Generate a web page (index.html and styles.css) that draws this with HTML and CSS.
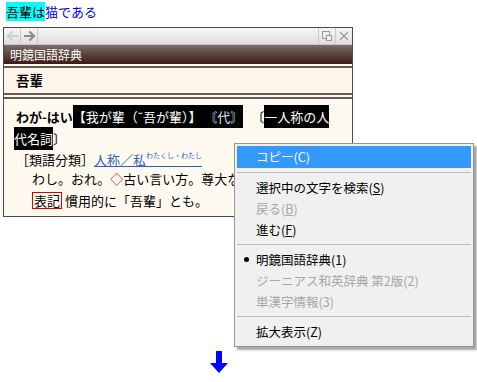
FILE: index.html
```html
<!DOCTYPE html>
<html>
<head>
    <title>吾輩は猫である</title>
    <meta charset="utf-8">
    <link rel="stylesheet" href="styles.css">
</head>
<body>
<div class="top-line"><span class="hit">吾輩は</span><span class="rest">猫である</span></div>

<div class="window">
    <div class="toolbar">
        <span class="tb-btn disabled">
            <svg width="15" height="14" viewBox="0 0 15 14"><path d="M13 7H3M7.5 2.5L3 7l4.5 4.5" fill="none" stroke="currentColor" stroke-width="2"/></svg>
        </span>
        <span class="tb-btn">
            <svg width="15" height="14" viewBox="0 0 15 14"><path d="M2 7h10M7.5 2.5L12 7l-4.5 4.5" fill="none" stroke="currentColor" stroke-width="2"/></svg>
        </span>
        <span class="tb-fill"></span>
        <span class="tb-btn right">
            <svg width="12" height="12" viewBox="0 0 12 12"><rect x="1.5" y="1.5" width="7" height="7" fill="none" stroke="currentColor"/><rect x="5.5" y="5.5" width="5" height="5" fill="#eee" stroke="currentColor"/></svg>
        </span>
        <span class="tb-btn right">
            <svg width="12" height="12" viewBox="0 0 12 12"><path d="M2 2l8 8M10 2l-8 8" stroke="currentColor" stroke-width="1.2"/></svg>
        </span>
    </div>
    <div class="titlebar">明鏡国語辞典</div>
    <div class="headword">吾輩</div>
    <div class="entry">
        <div class="line l1"><b>わが-はい</b><span class="sel">【我が輩（˘吾が輩）】 <span class="pos">〘代〙</span></span><span class="gap"> </span><span class="br">〔</span><span class="sel">一人称の人</span></div>
        <div class="line l2"><span class="sel">代名詞</span><span class="br-end">〕</span></div>
        <div class="line l3">［類語分類］<a class="link" href="#">人称／私<span class="ruby">わたくし・わたし</span></a></div>
        <div class="line l4">わし。おれ。<span class="mark">◇</span>古い言い方。尊大な言い方。</div>
        <div class="line l5"><span class="box">表記</span> 慣用的に「吾輩」とも。</div>
    </div>
</div>

<div class="menu">
    <div class="item active">コピー(C)</div>
    <div class="sep"></div>
    <div class="item">選択中の文字を検索(<u>S</u>)</div>
    <div class="item off">戻る(<u>B</u>)</div>
    <div class="item">進む(<u>F</u>)</div>
    <div class="sep"></div>
    <div class="item checked">明鏡国語辞典(1)</div>
    <div class="item off">ジーニアス和英辞典 第2版(2)</div>
    <div class="item off">単漢字情報(3)</div>
    <div class="sep"></div>
    <div class="item">拡大表示(Z)</div>
</div>

<div class="arrow">
    <svg width="18" height="22" viewBox="0 0 18 22"><path d="M6 0h6v12h6l-9 10-9-10h6z" fill="#0000ff"/></svg>
</div>
</body>
</html>
```

FILE: styles.css
```css
/* Page */
body {
    margin: 0;
    font-family: "Noto Sans CJK JP", "Noto Sans", sans-serif;
    font-size: 13px;
    color: #000;
    background: #fff;
}

/* Search line */
.top-line {
    padding: 3px 0 0 6px;
    height: 24px;
    line-height: 18px;
}

.hit {
    background-color: #00ffff;
}

.rest {
    color: #0000ff;
}

/* Dictionary window */
.window {
    margin-left: 3px;
    width: 348px;
    border: 1px solid #4a4a4a;
    background: #fffaf0;
}

.toolbar {
    display: flex;
    height: 16px;
    background: linear-gradient(#f6f6f6, #dedede);
    border-bottom: 1px solid #c8c8c8;
}

.tb-btn {
    width: 16px;
    display: flex;
    align-items: center;
    justify-content: center;
    border-right: 1px solid #c9c9c9;
    color: #8a8a8a;
}

.tb-btn.disabled {
    color: #cfcfcf;
}

.tb-btn.right {
    border-right: none;
    border-left: 1px solid #c9c9c9;
    color: #9a9a9a;
}

.tb-fill {
    flex: 1;
}

.titlebar {
    height: 19px;
    line-height: 19px;
    padding-left: 6px;
    font-size: 12px;
    color: #fff;
    background: linear-gradient(#7c6c68, #3a1c14);
}

.headword {
    margin-top: 2px;
    border-top: 2px solid #6a5a55;
    border-bottom: 2px solid #6a5a55;
    background: #fdf4ea;
    height: 25px;
    line-height: 25px;
    padding-left: 12px;
    font-weight: bold;
    font-size: 13.5px;
}

.entry {
    border-top: 2px solid #6a5a55;
    margin-top: 2px;
    padding: 8px 0 3px 10px;
    background: #fffaf0;
}

.line {
    line-height: 20px;
    white-space: nowrap;
}

.l1 {
    padding-left: 2px;
    height: 22px;
}

.l2 {
    height: 20px;
}

.l3 {
    padding-top: 1px;
    padding-left: 2px;
    height: 19px;
}

.l4 {
    padding-left: 18px;
    height: 22px;
}

.l5 {
    padding-left: 18px;
    height: 22px;
}

.sel {
    background: #000;
    color: #fff;
    padding: 2px 0;
}

.pos {
    color: #dce6ff;
}

.gap {
    display: inline-block;
    width: 8px;
}

.br {
    color: #000;
}

.link {
    color: #2b62c8;
    text-decoration: underline;
}

.ruby {
    font-size: 7px;
    vertical-align: 7px;
    line-height: 8px;
}

.mark {
    color: #e00000;
}

.box {
    border: 1px solid #e00000;
    padding: 0 1px;
    line-height: 15px;
    display: inline-block;
}

/* Context menu, floating over the window */
.menu {
    position: absolute;
    left: 234px;
    top: 143px;
    width: 234px;
    padding: 2px 2px 4px;
    background: #f0f0f0;
    border: 1px solid #979797;
    box-shadow: 3px 3px 2px rgba(0, 0, 0, 0.35);
    font-size: 12.5px;
}

.item {
    height: 21px;
    line-height: 21px;
    padding-left: 19px;
}

.item.active {
    height: 22px;
    line-height: 22px;
    background: #3399ff;
    color: #fff;
}

.item.off {
    color: #a6a6a6;
}

.item.checked {
    position: relative;
}

.item.checked::before {
    content: "";
    position: absolute;
    left: 7px;
    top: 8px;
    width: 5px;
    height: 5px;
    border-radius: 50%;
    background: #000;
}

.sep {
    height: 1px;
    margin: 4px 0 4px 0;
    background: #bcbcbc;
}

.arrow {
    position: absolute;
    left: 210px;
    top: 351px;
}
```
